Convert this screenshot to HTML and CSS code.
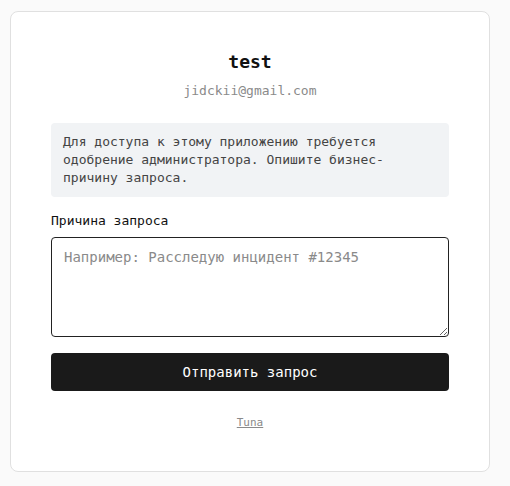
FILE: index.html
```html
<!DOCTYPE html>
<html lang="ru">
<head>
<meta charset="utf-8">
<link rel="stylesheet" href="styles.css">
</head>
<body>
<main class="card">
  <h1 class="title">test</h1>
  <p class="email">jidckii@gmail.com</p>
  <div class="notice">Для доступа к этому приложению требуется одобрение администратора. Опишите бизнес-причину запроса.</div>
  <form class="form">
    <label class="label" for="reason">Причина запроса</label>
    <textarea id="reason" class="textarea" placeholder="Например: Расследую инцидент #12345"></textarea>
    <button type="button" class="button">Отправить запрос</button>
  </form>
  <footer class="footer"><a class="link" href="#">Tuna</a></footer>
</main>
</body>
</html>
```

FILE: styles.css
```css
* { box-sizing: border-box; }
html, body { margin: 0; }
body {
  background: #fafafa;
  padding: 11px 10px;
  font-family: "DejaVu Sans Mono", "Liberation Mono", monospace;
  color: #111;
}
.card {
  width: 480px;
  background: #fff;
  border: 1px solid #e0e0e0;
  border-radius: 8px;
  padding: 39px 40px 40px;
  display: flex;
  flex-direction: column;
}
.title {
  margin: 0;
  text-align: center;
  font-size: 18px;
  line-height: 22px;
  font-weight: bold;
  color: #111;
}
.email {
  margin: 8px 0 0;
  text-align: center;
  font-size: 13px;
  line-height: 20px;
  color: #8a8a8a;
}
.notice {
  margin-top: 22px;
  background: #f1f3f5;
  border-radius: 4px;
  padding: 10px 12px;
  font-size: 13px;
  line-height: 18px;
  color: #444;
}
.form {
  display: flex;
  flex-direction: column;
  margin: 15px 0 0;
}
.label {
  font-size: 13px;
  line-height: 18px;
  font-weight: 500;
  color: #111;
}
.textarea {
  display: block;
  margin-top: 7px;
  height: 100px;
  width: 100%;
  border: 1px solid #222;
  border-radius: 4px;
  padding: 9px 12px;
  font-family: inherit;
  font-size: 14px;
  line-height: 20px;
  color: #111;
  resize: vertical;
  background: #fff;
}
.textarea::placeholder { color: #8a8a8a; }
.button {
  margin-top: 16px;
  height: 38px;
  border: none;
  border-radius: 4px;
  background: #1a1a1a;
  color: #fff;
  font-family: inherit;
  font-size: 14px;
}
.footer {
  margin-top: 24px;
  text-align: center;
  font-size: 11px;
  line-height: 16px;
}
.link { color: #8a8a8a; }
```
